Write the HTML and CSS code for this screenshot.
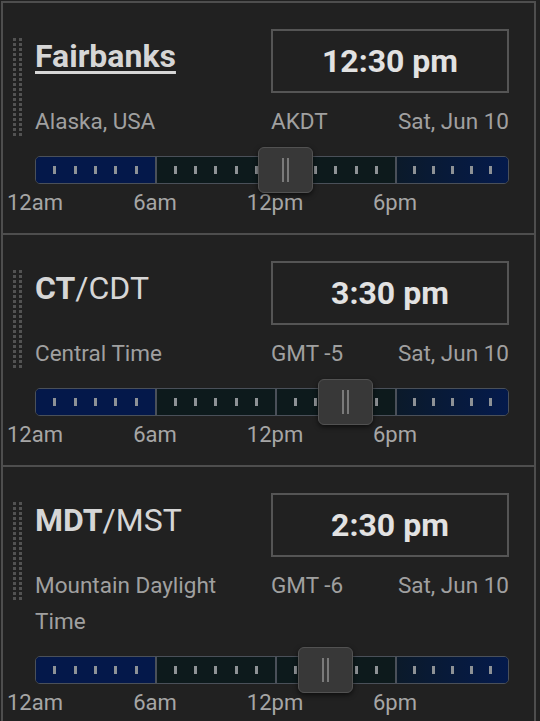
FILE: index.html
```html
<!DOCTYPE html>
<html lang="en">
<head>
  <meta charset="UTF-8">
  <meta name="viewport" content="width=device-width, initial-scale=1.0">
  <title>World Clock</title>
  <link rel="stylesheet" href="styles.css">
</head>
<body>
<div class="zone-list" id="zoneList"></div>

<script>
  // hour = local time as decimal hours, drives the thumb position
  const zones = [
    { name: '<b><u>Fairbanks</u></b>', region: 'Alaska, USA', abbr: 'AKDT', date: 'Sat, Jun 10', time: '12:30 pm', hour: 12.5 },
    { name: '<b>CT</b>/CDT', region: 'Central Time', abbr: 'GMT -5', date: 'Sat, Jun 10', time: '3:30 pm', hour: 15.5 },
    { name: '<b>MDT</b>/MST', region: 'Mountain Daylight Time', abbr: 'GMT -6', date: 'Sat, Jun 10', time: '2:30 pm', hour: 14.5 }
  ];
  const segments = ['night', 'day', 'day', 'evening'];
  const pxPerHour = 20;
  const thumbWidth = 55;

  function segmentHtml(kind) {
    return `<div class="seg seg-${kind}">${'<i></i>'.repeat(5)}</div>`;
  }

  function renderZones() {
    const list = document.getElementById('zoneList');
    list.innerHTML = '';
    zones.forEach(zone => {
      const left = zone.hour * pxPerHour - thumbWidth / 2;
      const card = document.createElement('div');
      card.className = 'zone-card';
      card.innerHTML = `
        <div class="drag-handle"></div>
        <div class="zone-body">
          <div class="zone-top">
            <div class="zone-name">${zone.name}</div>
            <div class="zone-time">${zone.time}</div>
          </div>
          <div class="zone-info">
            <div class="zone-region">${zone.region}</div>
            <div class="zone-meta"><span>${zone.abbr}</span><span>${zone.date}</span></div>
          </div>
          <div class="day-slider">
            <div class="track">${segments.map(segmentHtml).join('')}</div>
            <div class="thumb" style="left: ${left}px"><i></i><i></i></div>
          </div>
          <div class="hour-labels">
            <span>12am</span><span>6am</span><span>12pm</span><span>6pm</span>
          </div>
        </div>
      `;
      list.appendChild(card);
    });
  }

  renderZones();
</script>
</body>
</html>
```

FILE: styles.css
```css
body {
  margin: 0;
  padding: 1px 0 0 1px;
  background: #212121;
  font-family: Roboto, 'Noto Sans', sans-serif;
  color: #a0a0a0;
  overflow: hidden;
}
.zone-list {
  width: 535px;
  box-sizing: border-box;
  border: 2px solid #4e4e4e;
  border-bottom: 0;
}
.zone-card {
  display: flex;
  align-items: flex-start;
  padding: 26px 25px 17px 9px;
  border-top: 2px solid #4e4e4e;
}
.zone-card:first-child {
  border-top: 0;
}
.drag-handle {
  flex: 0 0 12px;
  height: 100px;
  margin: 9px 11px 0 0;
  background: linear-gradient(to right, transparent 1.5px, #525252 1.5px, #525252 4.5px, transparent 4.5px) 0 0 / 6px 100%;
  -webkit-mask: linear-gradient(#000 3px, transparent 3px) 0 0 / 100% 5px;
  mask: linear-gradient(#000 3px, transparent 3px) 0 0 / 100% 5px;
}
.zone-body {
  flex: 1;
  min-width: 0;
}
.zone-top {
  display: grid;
  grid-template-columns: 236px 1fr;
  height: 64px;
}
.zone-name {
  margin-top: 9px;
  font-size: 32px;
  line-height: 37px;
  color: #d6d6d6;
  white-space: nowrap;
}
.zone-name u {
  text-decoration-thickness: 2.5px;
  text-underline-offset: 4px;
}
.zone-time {
  display: flex;
  justify-content: center;
  align-items: center;
  border: 2px solid #555555;
  font-size: 32px;
  font-weight: bold;
  color: #e2e2e2;
}
.zone-info {
  display: grid;
  grid-template-columns: 236px 1fr;
  margin-top: 10px;
  font-size: 22.5px;
  line-height: 36px;
}
.zone-region {
  padding-right: 16px;
}
.zone-meta {
  display: flex;
  justify-content: space-between;
}
.day-slider {
  position: relative;
  margin-top: 17px;
}
.track {
  display: flex;
  height: 28px;
  box-sizing: border-box;
  border: 1.5px solid #4a5059;
  border-radius: 5px;
  overflow: hidden;
}
.seg {
  box-sizing: border-box;
  flex: 0 0 120px;
  display: flex;
  justify-content: space-evenly;
  align-items: center;
}
.seg + .seg {
  border-left: 2px solid #4a5059;
}
.seg:first-child {
  flex-basis: 119px;
}
.seg:last-child {
  flex: 1;
}
.seg i {
  width: 3px;
  height: 8px;
  background: #8e9296;
}
.seg-night {
  background: #04184a;
}
.seg-day {
  background: #0d1a1c;
}
.seg-evening {
  background: linear-gradient(to right, #0b1a2a, #041a4c);
}
.thumb {
  position: absolute;
  top: -9px;
  width: 55px;
  height: 46px;
  box-sizing: border-box;
  border: 1.5px solid #525252;
  border-radius: 6px;
  background: #383838;
  box-shadow: 0 2px 5px rgba(0, 0, 0, 0.6);
  display: flex;
  justify-content: center;
  align-items: center;
  gap: 3px;
}
.thumb i {
  width: 2px;
  height: 24px;
  background: #7a7a7a;
}
.hour-labels {
  display: flex;
  margin: 6px 0 0 -60px;
  font-size: 22px;
  line-height: 26px;
  color: #a6a6a6;
}
.hour-labels span {
  width: 120px;
  text-align: center;
}
```
